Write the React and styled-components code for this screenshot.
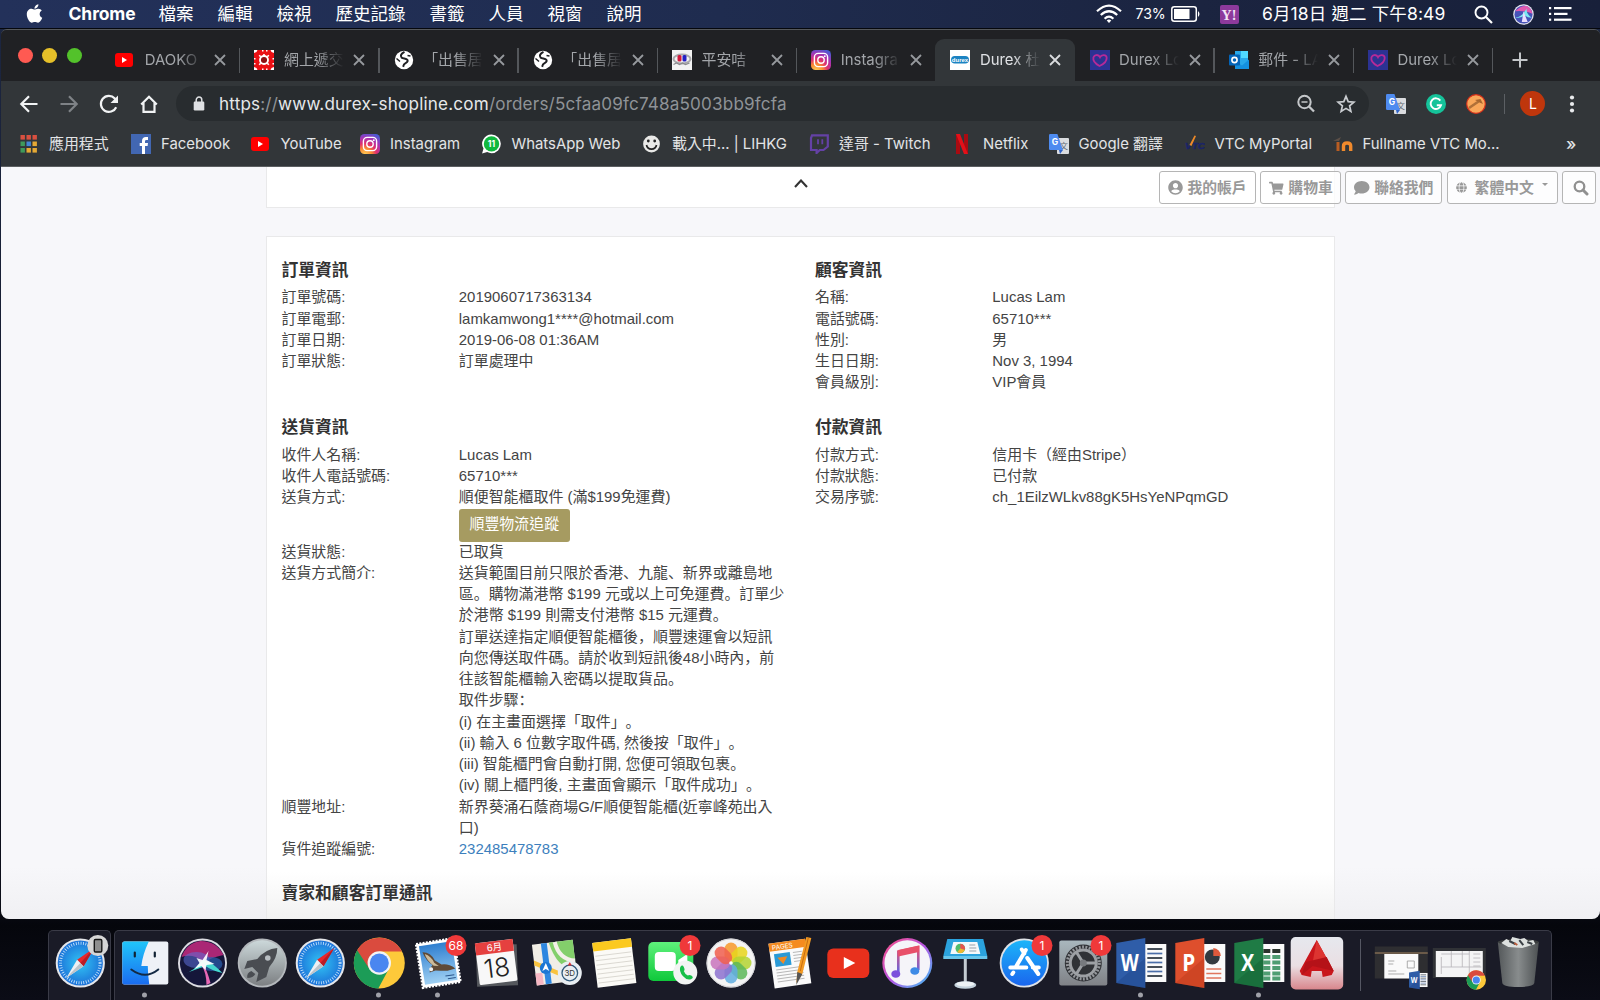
import React from "react";
import styled, { createGlobalStyle } from "styled-components";
import { FaApple, FaUserCircle, FaShoppingCart, FaComment, FaGlobe } from "react-icons/fa";

const ui = `Inter, "Noto Sans CJK TC", sans-serif`;
const body = `"Liberation Sans", "Noto Sans CJK TC", sans-serif`;

const Global = createGlobalStyle`
  * { box-sizing: border-box; }
  html, body { margin: 0; padding: 0; }
  body { width: 1600px; height: 1000px; overflow: hidden; background: #05060d; }
  svg { display: block; flex: none; }
`;

const Desktop = styled.div`
  display: flex;
  flex-direction: column;
  width: 1600px;
  height: 1000px;
  overflow: hidden;
  background: linear-gradient(180deg, #1d2742 0, #0b0d18 900px, #05060c 925px, #0b0c16 1000px);
`;

/* ---------- menu bar ---------- */
const MenuBar = styled.header`
  display: flex;
  align-items: center;
  height: 28px;
  flex: none;
  padding: 0 28px 0 25px;
  background: linear-gradient(90deg, #23315a 0, #1f2c4f 45%, #1b2440 75%, #18203a 100%);
  color: #fff;
  font-family: ${ui};
  font-size: 17.5px;
  line-height: 28px;
  white-space: nowrap;
`;
const AppleBox = styled.span`
  width: 43.5px;
  svg { margin: -2px 0 0 -1px; }
`;
const AppName = styled.b`
  width: 90px;
  font-size: 17.5px;
  font-weight: 700;
  letter-spacing: -0.1px;
`;
const Menus = styled.nav`
  display: flex;
  gap: 24px;
  flex: 1;
`;
const Status = styled.div`
  display: flex;
  align-items: center;
`;
const StatusItem = styled.span`
  display: block;
  width: ${(p) => p.$w}px;
  font-size: ${(p) => p.$size || 17.5}px;
  letter-spacing: ${(p) => p.$ls || 0}px;
`;

/* ---------- browser window ---------- */
const Window = styled.main`
  display: flex;
  flex-direction: column;
  flex: none;
  width: 1599px;
  height: 890px;
  margin-left: 1px;
  border-radius: 6px 6px 8px 8px;
  overflow: hidden;
  border-top: 1px solid #55585b;
  background: #323639;
`;
const Gap = styled.div`
  height: 1px;
  flex: none;
  background: #05070c;
`;
const TabStrip = styled.div`
  display: flex;
  height: 51px;
  flex: none;
  background: #202124;
  font-family: ${ui};
`;
const Lights = styled.div`
  display: flex;
  gap: 9.6px;
  width: 99.3px;
  padding: 18px 0 0 16.5px;
`;
const Light = styled.i`
  width: 15px;
  height: 15px;
  border-radius: 50%;
  background: ${(p) => p.$c};
`;
const Tab = styled.div`
  display: flex;
  align-items: center;
  width: 139.2px;
  height: 42px;
  margin-top: 9px;
  padding-left: 15px;
  position: relative;
  border-radius: 9px 9px 0 0;
  background: ${(p) => (p.$active ? "#323639" : "transparent")};
  color: ${(p) => (p.$active ? "#dfe1e4" : "#a3a6aa")};
  &::after {
    content: "";
    display: ${(p) => (p.$sep ? "block" : "none")};
    position: absolute;
    right: -1px;
    top: 9px;
    width: 1.4px;
    height: 25px;
    background: #54575b;
  }
`;
const TabTitle = styled.span`
  width: 60px;
  margin-left: 9.5px;
  overflow: hidden;
  white-space: nowrap;
  font-size: 14.9px;
  line-height: 22px;
  mask-image: linear-gradient(90deg, #000 55%, transparent 100%);
`;
const CloseBox = styled.span`
  margin-left: 9.5px;
  color: ${(p) => (p.$active ? "#dadcdf" : "#96999d")};
`;
const NewTab = styled.span`
  padding: 22px 0 0 20px;
`;

const Toolbar = styled.div`
  display: flex;
  align-items: center;
  height: 45px;
  flex: none;
`;
const NavButtons = styled.div`
  display: flex;
  gap: 16px;
  width: 175px;
  padding-left: 16px;
`;
const Omnibox = styled.div`
  display: flex;
  align-items: center;
  width: 1193px;
  height: 35px;
  border-radius: 18px;
  background: #282c2f;
  padding: 0 11px 0 17px;
`;
const Url = styled.span`
  flex: 1;
  margin-left: 14px;
  font-family: ${ui};
  font-size: 17.1px;
  line-height: 34px;
  letter-spacing: 0.18px;
  color: #e6e8ea;
  white-space: nowrap;
`;
const Dim = styled.span`
  color: #8f9397;
`;
const OmniActions = styled.span`
  display: flex;
  gap: 16px;
`;
const Extensions = styled.div`
  display: flex;
  align-items: center;
  padding-left: 17px;
`;
const ExtSlot = styled.span`
  display: flex;
  width: ${(p) => p.$w}px;
`;
const ToolDivider = styled.i`
  width: 1.4px;
  height: 20px;
  margin: 0 15px 0 17px;
  background: #5c6064;
`;
const Avatar = styled.span`
  width: 25px;
  height: 25px;
  border-radius: 50%;
  background: #bf360c;
  color: #fff;
  font: 14px/25px ${ui};
  text-align: center;
  margin-right: 19px;
`;

const Bookmarks = styled.div`
  display: flex;
  align-items: center;
  height: 41px;
  flex: none;
  padding-left: 18px;
  padding-bottom: 5px;
  border-bottom: 1px solid #5c5f61;
  font-family: ${ui};
  color: #e2e4e6;
`;
const Bookmark = styled.span`
  display: flex;
  align-items: center;
  gap: 10px;
  width: ${(p) => p.$w}px;
  font-size: 14.9px;
  line-height: 24px;
  white-space: nowrap;
`;
const More = styled.span`
  margin-left: auto;
  width: 34px;
  font-size: 17px;
  line-height: 22px;
  font-weight: 500;
`;

/* ---------- shop page ---------- */
const Page = styled.section`
  position: relative;
  display: flex;
  flex-direction: column;
  align-items: center;
  flex: 1;
  background: linear-gradient(180deg, #f7f7fa 0, #f7f7fa 700px, #f0f0f3 752px);
  font-family: ${body};
  font-size: 14.95px;
  line-height: 21.28px;
  color: #444;
  text-spacing-trim: space-all;
`;
const CollapseCard = styled.div`
  display: flex;
  justify-content: center;
  width: 1069px;
  height: 41px;
  flex: none;
  padding-top: 12px;
  background: #fff;
  border: solid #e9e9ea;
  border-width: 0 1.5px 1.5px;
`;
const Card = styled.div`
  display: grid;
  grid-template-columns: 533.5px 1fr;
  align-content: start;
  width: 1069px;
  flex: 1;
  margin-top: 28px;
  padding: 22px 14px 0 14.5px;
  background: linear-gradient(180deg, #fff 0, #fff 635px, #f1f1f1 684px);
  border: solid #e9e9ea;
  border-width: 1.5px 1.5px 0;
`;
const Block = styled.section`
  min-height: ${(p) => p.$h || 0}px;
`;
const Heading = styled.h2`
  margin: 0 0 ${(p) => p.$mb || 4.3}px;
  font-size: 16.8px;
  line-height: 23px;
  font-weight: 700;
  color: #333;
  white-space: nowrap;
`;
const Row = styled.div`
  display: grid;
  grid-template-columns: 177.3px 1fr;
  white-space: nowrap;
`;
const TextLine = styled.div`
  height: 21.28px;
`;
const Punct = styled.span`
  font-family: "Noto Sans CJK SC", sans-serif;
  line-height: 0;
`;
const Track = styled.button`
  display: block;
  width: 111px;
  height: 33px;
  margin: 1px 0 -1px;
  padding: 0 0 3px;
  border: 0;
  border-radius: 3px;
  background: #a69b61;
  color: #fff;
  font: 14.95px/30px ${body};
`;
const Link = styled.a`
  color: #3d7fbd;
`;
const FloatBar = styled.div`
  position: absolute;
  top: 4px;
  right: 4px;
  display: flex;
  gap: 4.4px;
`;
const FloatBtn = styled.span`
  display: flex;
  align-items: center;
  width: ${(p) => p.$w}px;
  height: 32.5px;
  padding: 1px 0 0 8px;
  border: 1.4px solid #b5b5b5;
  border-radius: 3px;
  background: rgba(255, 255, 255, 0.75);
  color: #999;
  font: 700 14.8px/30px ${body};
  white-space: nowrap;
`;
const BtnLabel = styled.span`
  margin-left: ${(p) => p.$ml || 4.5}px;
`;
const Caret = styled.i`
  margin: -7px 0 0 8px;
  border: solid transparent;
  border-top-color: #999;
  border-width: 3.5px 3.5px 0;
`;

/* ---------- dock ---------- */
const DockRow = styled.footer`
  display: flex;
  gap: 3px;
  height: 70px;
  margin-top: 11px;
  padding-left: 48px;
  flex: none;
`;
const Shelf = styled.div`
  display: flex;
  width: ${(p) => p.$w}px;
  padding-left: ${(p) => p.$pl}px;
  background: #1a1b27;
  border: 1px solid #3a3b47;
  border-bottom: 0;
  border-radius: 5px 5px 0 0;
`;
const Slot = styled.div`
  width: 58.65px;
  flex: none;
`;
const ShelfDivider = styled.i`
  width: 1.3px;
  height: 52px;
  margin: 8px 10.5px 0 13px;
  background: #555763;
`;

/* ---------- small icons ---------- */
const YouTube = () => (
  <svg width="20" height="20" viewBox="0 0 20 20"><rect x="0" y="3" width="18" height="14" rx="3" fill="#f00" /><path d="M7 7l5 3-5 3z" fill="#fff" /></svg>
);
const Insta = () => (
  <svg width="20" height="20" viewBox="0 0 20 20">
    <defs>
      <radialGradient id="ig" cx="0.25" cy="1.05" r="1.15"><stop offset="0" stopColor="#ffd45a" /><stop offset=".3" stopColor="#f98a33" /><stop offset=".5" stopColor="#e1306c" /><stop offset=".75" stopColor="#a534b5" /><stop offset="1" stopColor="#4a5bd3" /></radialGradient>
    </defs>
    <rect width="20" height="20" rx="4.5" fill="url(#ig)" />
    <g fill="none" stroke="#fff" strokeWidth="1.4"><rect x="3.4" y="3.4" width="13.2" height="13.2" rx="3.8" /><circle cx="10" cy="10" r="3.2" /></g>
    <circle cx="13.8" cy="6.2" r=".9" fill="#fff" />
  </svg>
);
const Flower = () => (
  <svg width="20" height="20" viewBox="-10 -10 20 20">
    <rect x="-10" y="-10" width="20" height="20" fill="#ea0f14" />
    <g fill="#fff"><path d="M-10-10h3.500l-1 2-2.500 1zM10-10H6.500l1 2 2.500 1zM-10 10h3.500l-1-2-2.500-1zM10 10H6.500l1-2 2.500-1z" /><path d="M-2-10h1.500v1.500H-2zM2-10H3.500v1.500H2zM-2 8.500h1.500V10H-2zM2 8.500h1.500V10H2zM-10-2h1.500v1.500H-10zM-10 3h1.500v1.500H-10zM8.500-2H10v1.500H8.500zM8.500 3H10v1.500H8.500z" /></g>
    <circle r="4" fill="#8e1014" stroke="#fff" strokeWidth="1.900" /><path d="M-4.800-4.800l1.500 1.500M4.800-4.800L3.300-3.300M-4.800 4.800l1.500-1.500M4.800 4.800L3.300 3.300M0-6V-4" stroke="#fff" strokeWidth="1.600" />
  </svg>
);
const GlobeTab = () => (
  <svg width="20" height="20" viewBox="0 0 20 20"><circle cx="10" cy="10" r="9.2" fill="#fff" /><path d="M10.5 1.8C7 3.5 6 6 7.6 7.6c1.6 1.2 4.6.7 5.8 2.2 1 1.5-.6 3-2.8 4-1 .7-1 2-1.4 3" fill="none" stroke="#202124" strokeWidth="2" /><path d="M2.500 8.500L6 11.500M13.500 5.500l3 .5" stroke="#202124" strokeWidth="1.500" /></svg>
);
const PingAn = () => (
  <svg width="20" height="20" viewBox="0 0 20 20"><rect width="20" height="20" fill="#f2f2f2" /><ellipse cx="10" cy="9" rx="8.500" ry="4.500" fill="none" stroke="#a8a8ac" strokeWidth="2" /><rect x="5.5" y="5" width="4" height="6.500" rx="1.500" fill="#d2193c" /><rect x="10.5" y="5" width="4" height="6.500" rx="1.500" fill="#2420c4" /><path d="M1.500 14.500l3-1.500 3 1.500 3-1.500 3 1.500 4-1.500" stroke="#8a8a8e" strokeWidth="1.300" fill="none" /></svg>
);
const DurexIcon = () => (
  <svg width="20" height="20" viewBox="0 0 20 20"><rect width="20" height="20" fill="#fff" /><rect x="1" y="6" width="18" height="7.6" rx="3.8" fill="#1b83c2" /><text x="10" y="11.8" fontSize="6" fontWeight="700" fill="#fff" textAnchor="middle" fontFamily="Liberation Sans">durex</text></svg>
);
const Heart = () => (
  <svg width="20" height="20" viewBox="0 0 20 20"><rect width="20" height="20" fill="#2b3293" /><path d="M9.500 16C5 13.500 2.800 10.500 3.400 7.600 4.300 4.500 8.500 4 10 7.200c1.600-3.200 6.500-2.700 6.700.5C16.800 11 14 14 9.500 16z" fill="none" stroke="#b52a98" strokeWidth="1.800" /></svg>
);
const Outlook = () => (
  <svg width="20" height="20" viewBox="0 0 20 20"><rect x="6" y="1" width="13" height="15" fill="#28a8ea" /><rect x="12" y="1" width="7" height="7" fill="#50d9ff" /><path d="M6 19V11l7 4.500 7-6V19z" fill="#1490df" /><rect y="4.500" width="11" height="11" rx="1" fill="#0364b8" /><circle cx="5.500" cy="10" r="2.600" fill="none" stroke="#fff" strokeWidth="1.600" /></svg>
);
const Close = () => (
  <svg width="12" height="12" viewBox="0 0 12 12"><path d="M1 1l10 10M11 1L1 11" stroke="currentColor" strokeWidth="1.8" /></svg>
);
const Translate = () => (
  <svg width="20" height="20" viewBox="0 0 20 20"><rect x="8" y="4" width="12" height="16" rx="1" fill="#dadcdf" /><text x="14.700" y="15" fontSize="8.500" fill="#5f6a74" textAnchor="middle" fontFamily="Noto Sans CJK TC">文</text><path d="M1.200 0h7.200L14 16H1.200Q0 16 0 14.800V1.200Q0 0 1.200 0z" fill="#4e8bf0" /><path d="M10 16h4l-3 4z" fill="#2f63c8" /><text x="6" y="11" fontSize="8.500" fontWeight="700" fill="#fff" textAnchor="middle" fontFamily="Inter">G</text></svg>
);
const Apps = () => (
  <svg width="20" height="20" viewBox="0 0 20 20">
    {["#d95040", "#d95040", "#d95040", "#3f9a5a", "#4285d4", "#e5a935", "#3f9a5a", "#e5a935", "#e5a935"].map((c, i) => (<rect key={i} x={1.5 + (i % 3) * 6} y={1 + Math.floor(i / 3) * 6.500} width="4.400" height="4.600" fill={c} />))}
  </svg>
);
const Facebook = () => (
  <svg width="20" height="20" viewBox="0 0 20 20"><rect width="20" height="20" fill="#4267b2" /><path d="M11 20v-8H8.700V9H11V7c0-2.600 1.500-4 3.900-4h2.100v2.900h-1.500c-1.200 0-1.500.600-1.500 1.500V9h3l-.400 3H14v8z" fill="#fff" /></svg>
);
const Whats = () => (
  <svg width="20" height="20" viewBox="0 0 20 20"><path d="M9.500 .5A9.300 9.300 0 0 1 9.500 19.200a9 9 0 0 1-4.300-1.100L.1 19.500 1.500 14.600A9.300 9.300 0 0 1 9.500 .5z" fill="#fff" /><circle cx="9.500" cy="9.900" r="7.700" fill="#10b83e" /><text x="9.500" y="13" fontSize="8.500" fontWeight="700" textAnchor="middle" fill="#fff" fontFamily="Inter">11</text></svg>
);
const Lihkg = () => (
  <svg width="20" height="20" viewBox="0 0 20 20"><circle cx="9.500" cy="10" r="8.400" fill="#e9e9e7" /><circle cx="6.300" cy="7" r="1.400" fill="#222" /><circle cx="12.700" cy="7" r="1.400" fill="#222" /><path d="M4.500 11c1 5.500 9 5.500 10 0" fill="none" stroke="#222" strokeWidth="1.700" /></svg>
);
const TwitchIcon = () => (
  <svg width="20" height="20" viewBox="0 0 20 20"><path d="M3 1.300h15.800V12.500L14.500 16H10.800l-3.200 3v-3H2V4z" fill="none" stroke="#6441a5" strokeWidth="2.200" /><path d="M9 5.300v5M13.300 5.300v5" stroke="#6441a5" strokeWidth="1.800" /></svg>
);
const NetflixIcon = () => (
  <svg width="20" height="20" viewBox="0 0 20 20"><path d="M3 0h4v20l-4 .3zM11 0h4v20.300L11 20z" fill="#a90b12" /><path d="M3 0h4l8 20.300-4-.3z" fill="#e21019" /></svg>
);
const VtcIcon = () => (
  <svg width="20" height="20" viewBox="0 0 20 20"><text x="0" y="15" fontSize="9.500" fontStyle="italic" fontWeight="700" fill="#1b2468" stroke="#1b2468" strokeWidth=".5" textLength="20" lengthAdjust="spacingAndGlyphs" fontFamily="Liberation Sans">VTC</text><path d="M4.500 11l5-9.500 1.500.5L6.500 12z" fill="#ef8a28" /></svg>
);
const MoodleIcon = () => (
  <svg width="20" height="20" viewBox="0 0 20 20"><path d="M0 7l8-4-2 4z" fill="#5d5048" /><path d="M5 8v9" stroke="#b95d22" strokeWidth="3" /><path d="M10.500 17v-5q0-3 3.600-3t3.600 3v5" stroke="#f08a2c" strokeWidth="3.400" fill="none" /></svg>
);

/* ---------- dock icons, drawn around the centre of a slot ---------- */
const DockIcon = ({ children, badge, running }) => (
  <svg width="58.600" height="69" viewBox="-29.300 -32 58.600 69">
    {children}
    {badge && (<g><circle cx="17.700" cy="-17.500" r="10.500" fill="#f0393a" /><text x="17.700" y="-13.200" fontSize="12" fill="#fff" textAnchor="middle" fontFamily="Inter">{badge}</text></g>)}
    {running && <circle cx="-.8" cy="32" r="2.500" fill="#a0a1a8" />}
  </svg>
);
const Safari = () => (
  <g>
    <circle r="24.600" fill="#e4e6ea" /><circle r="22.600" fill="url(#saf)" />
    <circle r="19.800" fill="none" stroke="#cfeaff" strokeWidth="3" strokeDasharray="0.800 1.650" />
    <path d="M14-15L3.200 3.200-3.200-3.200z" fill="#e8262c" /><path d="M-14 15L-3.200-3.200 3.200 3.200z" fill="#eef0f2" /><path d="M14-15L3.200 3.200 0 0z" fill="#b81c26" /><path d="M-14 15L3.200 3.200 0 0z" fill="#bcc3ca" />
  </g>
);
const Chrome = () => (
  <g>
    <circle r="25.500" fill="#fdc93a" />
    <path d="M0-11.500H-1L-21.800-13.200A25.500 25.500 0 0 0-1 25.500L9.500 6z" fill="#1c9c57" />
    <path d="M-22.100-12.750A25.500 25.500 0 0 1 22.600-11.500H0L-10.500 5z" fill="#da4b3e" />
    <circle r="11.700" fill="#f4f4f4" /><circle r="9.500" fill="#4a86f0" />
  </g>
);
const Office = ({ c, d, letter, children }) => (
  <g>
    <rect x="0" y="-19" width="25" height="38" fill="#fafafa" />{children}
    <path d="M-25-20L4-25V25L-25 20z" fill={c} /><path d="M-25 20L4-5V25z" fill={d} opacity=".3" />
    <text x="-11.600" y="8.300" fontSize="23" fontWeight="700" fill="#fff" textAnchor="middle" fontFamily="Open Sans" textLength={letter === "W" ? 18 : 13} lengthAdjust="spacingAndGlyphs">{letter}</text>
  </g>
);
const WordLines = () => (<g strokeWidth="1.700">{[-14, -9.500, -5, -.5, 4, 8.500, 13].map((y, i) => (<path key={y} d={`M6 ${y}h15`} stroke={i % 2 ? "#4b6ea8" : "#26303c"} />))}</g>);
const petals = ["#f79a2c", "#e8d51c", "#b5d433", "#5cb85a", "#62aee0", "#8d72cf", "#c874bd", "#f0604f"];

const dockItems = [
  { run: 1, el: (<g><rect x="-23" y="-21.500" width="46" height="43" rx="2" fill="#eef1f7" /><path d="M-21-21.500H3.500Q-2.500-9-4 3H2.500Q2.500 12 4 21.500H-21Q-23 21.500-23 19.500V-19.500Q-23-21.500-21-21.500z" fill="url(#find)" /><path d="M-10.500-10.500v4M9.500-10.500v4" stroke="#123" strokeWidth="2.200" strokeLinecap="round" /><path d="M-14 6.500Q0 17 13 6.500" fill="none" stroke="#142a44" strokeWidth="2" strokeLinecap="round" /></g>) },
  { el: (<g transform="translate(-.8 0)"><circle r="24.500" fill="#dcdce2" /><circle r="22.600" fill="#15163a" /><path d="M-21-6Q-16-20-2-22 14-22 21-8 12-6 8-4L0-2Q-10-10-21-6z" fill="#c42a80" opacity=".85" /><ellipse cx="-6" cy="-3" rx="13" ry="8" fill="#5c6fd8" opacity=".55" /><ellipse cx="9" cy="1" rx="11" ry="7" fill="#2a5fae" opacity=".7" /><path d="M-19 11Q-8 8-2-1L1-3 8 0Q12 2 20 10 10 8 3 3-8 7-19 11z" fill="#45d6cf" /><path d="M0 0Q5 8 8 20L4 22Q4 10-1 2z" fill="#e868b6" /><path d="M-6-5L0-3 6-12 4-3 12 1 4 2 3 7-1 3-8 6-3 0z" fill="#fff" opacity=".92" /></g>) },
  { el: (<g><circle r="24.600" fill="#b4b8bc" /><circle r="22.800" fill="url(#rock)" /><path d="M15-15Q3-14-5-4L-15-2-18 6-10 4-4 10-6 19 4 14 7 4Q15-5 15-15z" fill="#4a4d52" /><circle cx="5.500" cy="-5" r="2.800" fill="#b9bfc3" /><path d="M-11 8Q-16 10-15 15-9 15-7 11z" fill="#4a4d52" /></g>) },
  { el: <Safari /> },
  { run: 1, el: <Chrome /> },
  { run: 1, badge: "68", el: (<g transform="rotate(-9)"><rect x="-19" y="-22" width="38" height="44" fill="#fff" stroke="#fff" strokeWidth="2.500" strokeDasharray="2 1.300" /><rect x="-16.500" y="-19.500" width="33" height="39" fill="url(#sky)" /><path d="M-14-13Q-6-12-3-3L3 2Q10 2 16 8L8 9 1 8-4 7-10 8-9 4-6 1Q-12-4-14-13z" fill="#5f4a37" /><path d="M-12-11Q-6-8-4-1L0 3-5 2Q-11-4-12-11z" fill="#cdbb9a" /><circle cx="-8" cy="5" r="2" fill="#eee" /><path d="M5 14h9M7 17h8" stroke="#2b568c" strokeWidth="1" /></g>) },
  { el: (<g transform="rotate(-7)"><rect x="-20" y="-18" width="41" height="41" fill="#54575c" transform="rotate(5)" /><rect x="-19" y="-22" width="38" height="42" rx="1.500" fill="#f8f8f8" /><path d="M-19-22h38v12h-38z" fill="#e5403f" /><text y="-12.500" fontSize="9.500" fill="#fff" textAnchor="middle" fontFamily="Inter, Noto Sans CJK TC">6月</text><text y="14" fontSize="26" fill="#222" textAnchor="middle" fontFamily="Inter" fontWeight="300">18</text></g>) },
  { el: (<g><g transform="rotate(-7)"><rect x="-21" y="-21" width="41" height="41" fill="#f1eee6" /><path d="M-4-21H20V8Q2 8-4-21z" fill="#83cf6b" /><path d="M2-21Q4-3 20 0" stroke="#f3f0e9" strokeWidth="4" fill="none" /><path d="M-12-21h6V20h-6z" fill="#2d87e0" /><path d="M-21-5L2 8V13L-21 0z" fill="#f9c33e" /><path d="M-21 8h7v12h-7z" fill="#f6b7c3" /></g><circle cx="-9.500" cy="5" r="6" fill="#1b77d4" /><path d="M-9.500 0l3.500 8-3.500-2-3.500 2z" fill="#fff" /><circle cx="14.500" cy="10" r="12" fill="#e9eef2" /><circle cx="14.500" cy="10" r="7.800" fill="none" stroke="#30597a" strokeWidth="1.300" /><text x="14.500" y="12.800" fontSize="8" textAnchor="middle" fill="#333" fontFamily="Inter">3D</text><path d="M14.500-1l2 3.500h-4z" fill="#d33" /></g>) },
  { el: (<g transform="rotate(-7)"><rect x="-19.500" y="-22.500" width="39" height="45" fill="#fbfaf6" /><path d="M-19.500-22.500h39v8.500h-39z" fill="#fbc91f" /><g stroke="#d4d2cb" strokeWidth=".8">{[-9, -4.500, 0, 4.500, 9, 13.500, 18].map((y) => (<path key={y} d={`M-18 ${y}h36`} />))}</g></g>) },
  { badge: "1", el: (<g><rect x="-24" y="-21" width="45" height="39" rx="5" fill="url(#ft)" /><rect x="-17.500" y="-11" width="21" height="19" rx="4" fill="#fff" /><path d="M6-3l9-6V8L6 2z" fill="#fff" /><circle cx="13" cy="9.500" r="12" fill="#f2f4f3" /><path d="M8 4q2-3 3.500 0t0 4q1 3 4 4.500 1.500-1 3.500 0 3 2 0 3.500Q15 18 10.500 13 6.500 8 8 4z" fill="#18bf49" /></g>) },
  { el: (<g transform="translate(-.3 0)"><circle r="24.500" fill="#f4f4f4" /><circle r="24" fill="none" stroke="#cfcfd3" />{petals.map((c, i) => (<rect key={c} x="-6.500" y="-20.500" width="13" height="19.500" rx="6.500" fill={c} opacity=".86" transform={`rotate(${i * 45})`} />))}<circle r="1.800" fill="#fff" /></g>) },
  { el: (<g><g transform="rotate(-8)"><rect x="-19" y="-22" width="37" height="45" fill="#fafafa" /><path d="M-19-22h37v8h-37z" fill="#f58b1f" /><text x="-16" y="-15.200" fontSize="6.500" fill="#fff" fontFamily="Inter">PAGES</text><rect x="-15" y="-11" width="16" height="13" fill="#2a9ad6" /><path d="M-12-7h10l-5 7z" fill="#f08a24" /><g stroke="#b8b8b8" strokeWidth="1">{[5, 8, 11, 14, 17].map((y) => (<path key={y} d={`M-15 ${y}h27`} />))}<path d="M4-10h9M4-7h9M4-4h9M4-1h9" /></g></g><path d="M16-26l5 1-9 36-6 9 1-11z" fill="#f39a22" /><path d="M7 9l5 2-6 11z" fill="#555" /><path d="M18-25L10 8" stroke="#c86c10" /></g>) },
  { el: (<g><rect x="-21" y="-14.500" width="42" height="29.500" rx="6" fill="#e8301c" /><path d="M-4.500-6L7 0-4.500 6z" fill="#fff" /></g>) },
  { el: (<g><circle r="25" fill="url(#itr)" /><circle r="22.800" fill="#f5f4f9" /><path d="M-9 10.500V-11.500L11-16V7" fill="none" stroke="url(#itn)" strokeWidth="2.600" /><path d="M-9-13L11.500-17.500V-11L-9-6.500z" fill="#e8506a" /><ellipse cx="-11.500" cy="11" rx="4.500" ry="3.800" fill="#7b50dc" /><ellipse cx="7.500" cy="8" rx="4.500" ry="3.800" fill="#3e8ae6" /></g>) },
  { el: (<g><path d="M-18-24H18L22-7H-22z" fill="#2ba3de" /><path d="M-22-7h44v3h-44z" fill="#68c6ec" /><path d="M-12-21H12L15-9H-15z" fill="#f5f8fa" /><circle cx="-5" cy="-14.500" r="4.800" fill="#4fbc6c" /><path d="M-5-14.500V-19.300A4.800 4.800 0 0 1-.5-13z" fill="#e9524e" /><path d="M-5-14.500L-.5-13A4.800 4.800 0 0 1-8-11z" fill="#f1b72e" /><path d="M4-18h6M4-15h7M4-12h7" stroke="#98a2aa" /><path d="M0-4V20" stroke="#c4ccd2" strokeWidth="3" /><ellipse cy="22" rx="11" ry="3.800" fill="#c5d3dd" /><ellipse cy="21" rx="9" ry="2.500" fill="#eef3f6" /></g>) },
  { badge: "1", el: (<g><circle r="24.600" fill="#dfe2e6" /><circle r="22.800" fill="url(#as)" /><g stroke="#fff" strokeWidth="4" strokeLinecap="round"><path d="M1.500-13L-8.500 4M-2.500-13.500L0-9.500M3-5L14 11M-14 4.500H2M8.500 4.500h6M-11 9.500l-1 1.500" /></g></g>) },
  { badge: "1", el: (<g><rect x="-24" y="-22.500" width="48" height="45" rx="2" fill="url(#set)" /><circle r="18.500" fill="#303236" /><circle r="16" fill="none" stroke="#94979b" strokeWidth="3" strokeDasharray="1.900 1.450" /><circle r="13" fill="none" stroke="#9da0a4" strokeWidth="3" /><path d="M0 0L-7-11M0 0L-7 11M0 0H13" stroke="#9da0a4" strokeWidth="3" /><circle r="3.500" fill="#777a7e" /></g>) },
  { run: 1, el: <Office c="#2f5da8" d="#17377a" letter="W"><WordLines /></Office> },
  { el: (<Office c="#de4f2d" d="#a92d12" letter="P"><circle cx="12" cy="-6" r="7.500" fill="#333a40" /><path d="M13-7V-15A8 8 0 0 1 20.500-7z" fill="#de5a3c" /><path d="M6 6h15M6 10.500h15M6 15h15" stroke="#e0765e" strokeWidth="1.600" /></Office>) },
  { run: 1, el: (<Office c="#1f7b45" d="#0d5229" letter="X">{[-14, -8, -2.500, 3, 8.500, 13.500].map((y, i) => (<g key={y} fill={i ? "#4f9d72" : "#2a332d"}><rect x="4" y={y} width="7" height="4" /><rect x="13" y={y} width="8" height="4" /></g>))}</Office>) },
  { el: (<g transform="translate(-.6 0)"><rect x="-26" y="-26" width="52.500" height="52.500" rx="5" fill="url(#cad)" /><path d="M0-23L17 8 15 12 6 14 5 8H-5L-6 14-15 12-17 8z" fill="#c9161c" /><path d="M0-23L17 8 4-3-4-1z" fill="#dd3431" /><path d="M-11-1L10-6 17 8-4 3-15 12z" fill="#b51218" /></g>) },
];

const Defs = () => (
  <svg width="0" height="0" style={{ position: "absolute" }}>
    <defs>
      <radialGradient id="saf"><stop offset="0" stopColor="#32c5f5" /><stop offset="1" stopColor="#1c72d8" /></radialGradient>
      <linearGradient id="find" x2="0" y2="1"><stop offset="0" stopColor="#20c6fa" /><stop offset="1" stopColor="#1a6cf0" /></linearGradient>
      <linearGradient id="rock" x2="0" y2="1"><stop offset="0" stopColor="#ccd8da" /><stop offset="1" stopColor="#7c7f82" /></linearGradient>
      <linearGradient id="sky" x2="0" y2="1"><stop offset="0" stopColor="#2f7fd0" /><stop offset="1" stopColor="#9fd0f3" /></linearGradient>
      <linearGradient id="ft" x2="0" y2="1"><stop offset="0" stopColor="#5ef17b" /><stop offset="1" stopColor="#0fc83b" /></linearGradient>
      <linearGradient id="itr" x2="1" y2="1"><stop offset="0" stopColor="#fb4d7d" /><stop offset=".5" stopColor="#b655e4" /><stop offset="1" stopColor="#37c8f6" /></linearGradient>
      <linearGradient id="itn" x2="0" y2="1"><stop offset="0" stopColor="#f0526e" /><stop offset="1" stopColor="#5d67e4" /></linearGradient>
      <linearGradient id="as" x2="0" y2="1"><stop offset="0" stopColor="#1cb5f9" /><stop offset="1" stopColor="#1a66ee" /></linearGradient>
      <linearGradient id="set" x2="0" y2="1"><stop offset="0" stopColor="#a9b7bd" /><stop offset="1" stopColor="#808287" /></linearGradient>
      <linearGradient id="cad" x2="0" y2="1"><stop offset="0" stopColor="#e6e8ee" /><stop offset=".55" stopColor="#eadfe3" /><stop offset="1" stopColor="#d9868c" /></linearGradient>
      <linearGradient id="bin" x2="1" y2="0"><stop offset="0" stopColor="#54585a" /><stop offset=".5" stopColor="#888c8d" /><stop offset="1" stopColor="#4c5052" /></linearGradient>
    </defs>
  </svg>
);

const tabs = [
  { icon: <YouTube />, t: "DAOKO" },
  { icon: <Flower />, t: "網上遞交" },
  { icon: <GlobeTab />, t: "「出售居" },
  { icon: <GlobeTab />, t: "「出售居" },
  { icon: <PingAn />, t: "平安咭" },
  { icon: <Insta />, t: "Instagra", nosep: true },
  { icon: <DurexIcon />, t: "Durex 杜", active: true, nosep: true },
  { icon: <Heart />, t: "Durex Lo" },
  { icon: <Outlook />, t: "郵件 - LA" },
  { icon: <Heart />, t: "Durex Lo" },
];

const marks = [
  { icon: <Apps />, t: "應用程式", w: 112 },
  { icon: <Facebook />, t: "Facebook", w: 119.5 },
  { icon: <YouTube />, t: "YouTube", w: 109.5 },
  { icon: <Insta />, t: "Instagram", w: 121.5 },
  { icon: <Whats />, t: "WhatsApp Web", w: 160.5 },
  { icon: <Lihkg />, t: "載入中... | LIHKG", w: 167 },
  { icon: <TwitchIcon />, t: "達哥 - Twitch", w: 144 },
  { icon: <NetflixIcon />, t: "Netflix", w: 95.5 },
  { icon: <Translate />, t: "Google 翻譯", w: 136 },
  { icon: <VtcIcon />, t: "VTC MyPortal", w: 148 },
  { icon: <MoodleIcon />, t: "Fullname VTC Mo...", w: 166 },
];

const orderRows = [["訂單號碼:", "2019060717363134"], ["訂單電郵:", "lamkamwong1****@hotmail.com"], ["訂單日期:", "2019-06-08 01:36AM"], ["訂單狀態:", "訂單處理中"]];
const customerRows = [["名稱:", "Lucas Lam"], ["電話號碼:", "65710***"], ["性別:", "男"], ["生日日期:", "Nov 3, 1994"], ["會員級別:", "VIP會員"]];
const paymentRows = [["付款方式:", "信用卡（經由Stripe）"], ["付款狀態:", "已付款"], ["交易序號:", "ch_1EilzWLkv88gK5HsYeNPqmGD"]];
const intro = [
  "送貨範圍目前只限於香港、九龍、新界或離島地",
  "區。購物滿港幣 $199 元或以上可免運費。訂單少",
  "於港幣 $199 則需支付港幣 $15 元運費。",
  "訂單送達指定順便智能櫃後，順豐速運會以短訊",
  "向您傳送取件碼。請於收到短訊後48小時內，前",
  "往該智能櫃輸入密碼以提取貨品。",
  "取件步驟：",
  "(i) 在主畫面選擇「取件」。",
  "(ii) 輸入 6 位數字取件碼, 然後按「取件」。",
  "(iii) 智能櫃門會自動打開, 您便可領取包裹。",
  "(iv) 關上櫃門後, 主畫面會顯示「取件成功」。",
];

/* Full-width stops sit at the lower left of their cell. */
const Line = ({ text }) => (
  <TextLine>
    {text.split(/([、。，：])/).map((s, i) => (i % 2 ? <Punct key={i} lang="zh-Hans">{s}</Punct> : s))}
  </TextLine>
);

const shippingRows = [
  ["收件人名稱:", "Lucas Lam"],
  ["收件人電話號碼:", "65710***"],
  ["送貨方式:", <>順便智能櫃取件 (滿$199免運費)<Track>順豐物流追蹤</Track></>],
  ["送貨狀態:", "已取貨"],
  ["送貨方式簡介:", intro.map((l) => <Line key={l} text={l} />)],
  ["順豐地址:", <>新界葵涌石蔭商場G/F順便智能櫃(近寧峰苑出入<br />口)</>],
  ["貨件追蹤編號:", <Link>232485478783</Link>],
];

const Info = ({ title, rows, h, mb }) => (
  <Block $h={h}>
    <Heading $mb={mb}>{title}</Heading>
    {rows.map(([k, v]) => (<Row key={k}><div>{k}</div><div>{v}</div></Row>))}
  </Block>
);

export default function App() {
  return (
    <Desktop lang="zh-Hant">
      <Global />
      <Defs />
      <MenuBar>
        <AppleBox><FaApple size={21} /></AppleBox>
        <AppName>Chrome</AppName>
        <Menus>{["檔案", "編輯", "檢視", "歷史記錄", "書籤", "人員", "視窗", "說明"].map((m) => <span key={m}>{m}</span>)}</Menus>
        <Status>
          <StatusItem $w={40}>
            <svg width="26" height="20" viewBox="0 0 26 20"><g fill="none" stroke="#fff" strokeWidth="2.200"><path d="M1 7.300Q13-4 25 7.300M4.800 11Q13 3.500 21.200 11M8.600 14.700Q13 10.500 17.400 14.700" /></g><path d="M13 19l-2.300-2.600q2.300-2 4.600 0z" fill="#fff" /></svg>
          </StatusItem>
          <StatusItem $w={35.5} $size={14.2} $ls={-0.1}>73%</StatusItem>
          <StatusItem $w={49}>
            <svg width="30" height="16" viewBox="0 0 30 16"><rect x=".8" y=".8" width="24.500" height="14.400" rx="2.500" fill="none" stroke="#fff" strokeWidth="1.500" /><rect x="3" y="3" width="15.500" height="10" fill="#fff" /><path d="M27 5q3 3 0 6z" fill="#fff" /></svg>
          </StatusItem>
          <StatusItem $w={42}>
            <svg width="19" height="19" viewBox="0 0 19 19"><rect width="19" height="19" rx="2" fill="#8d3a9c" /><text x="9" y="14.500" fontSize="14" fontWeight="700" textAnchor="middle" fill="#f3e4f5" fontFamily="Liberation Serif">Y!</text></svg>
          </StatusItem>
          <StatusItem $w={211.5} $ls={0.12}>6月18日 週二 下午8:49</StatusItem>
          <StatusItem $w={39.5}>
            <svg width="19" height="19" viewBox="0 0 19 19"><circle cx="7.500" cy="7.500" r="6" fill="none" stroke="#fff" strokeWidth="1.900" /><path d="M12 12l6 6" stroke="#fff" strokeWidth="2.200" /></svg>
          </StatusItem>
          <StatusItem $w={36}>
            <svg width="21" height="21" viewBox="-25 -25 50 50"><circle r="24.500" fill="#e4e4ee" /><circle r="21.500" fill="#4652b8" /><path d="M-20-8Q-6-22 8-20 20-14 21-2 8-10-20-8z" fill="#e15ab0" /><path d="M-20 8Q-6 6 0-4L8-14Q5-3 20 8 10 8 2 2-6 10-20 8z" fill="#7be7f0" /><path d="M0-8L3 0 10 18-4 18z" fill="#e9dcff" /></svg>
          </StatusItem>
          <svg width="23" height="14" viewBox="0 0 23 14"><g fill="#fff"><rect width="2.200" height="2.200" /><rect y="5.800" width="2.200" height="2.200" /><rect y="11.600" width="2.200" height="2.200" /><rect x="5" width="17.500" height="2.200" /><rect x="5" y="5.800" width="13.500" height="2.200" /><rect x="5" y="11.600" width="17.500" height="2.200" /></g></svg>
        </Status>
      </MenuBar>
      <Gap />
      <Window>
        <TabStrip>
          <Lights><Light $c="#ff5a52" /><Light $c="#e6c029" /><Light $c="#53c22b" /></Lights>
          {tabs.map((t, i) => (
            <Tab key={i} $active={t.active} $sep={!t.nosep}>
              {t.icon}<TabTitle>{t.t}</TabTitle><CloseBox $active={t.active}><Close /></CloseBox>
            </Tab>
          ))}
          <NewTab><svg width="16" height="16" viewBox="0 0 16 16"><path d="M8 .5v15M.5 8h15" stroke="#c4c7ca" strokeWidth="2" /></svg></NewTab>
        </TabStrip>
        <Toolbar>
          <NavButtons>
            <svg width="24" height="24" viewBox="0 0 24 24"><path d="M20.500 12H5M12 4.300L4.300 12l7.700 7.700" fill="none" stroke="#f1f3f4" strokeWidth="2.200" /></svg>
            <svg width="24" height="24" viewBox="0 0 24 24"><path d="M3.500 12H19M12 4.300l7.700 7.700-7.700 7.700" fill="none" stroke="#7e8286" strokeWidth="2.200" /></svg>
            <svg width="24" height="24" viewBox="0 0 24 24"><path d="M19.200 15.200A8 8 0 1 1 17.800 6.500L20 9" fill="none" stroke="#f1f3f4" strokeWidth="2.200" /><path d="M21 3.500V11h-7.500z" fill="#f1f3f4" /></svg>
            <svg width="24" height="24" viewBox="0 0 24 24"><path d="M6.500 11v8.800h11V11M4.200 12.500L12 4.700l7.800 7.800" fill="none" stroke="#f1f3f4" strokeWidth="2.200" /></svg>
          </NavButtons>
          <Omnibox>
            <svg width="12" height="15" viewBox="0 0 12 15"><rect x=".7" y="5.500" width="10.600" height="9" rx="1.200" fill="#dfe1e4" /><path d="M3.200 6V3.900a2.800 2.800 0 0 1 5.600 0V6" fill="none" stroke="#dfe1e4" strokeWidth="1.500" /></svg>
            <Url>https<Dim>://</Dim>www.durex-shopline.com<Dim>/orders/5cfaa09fc748a5003bb9fcfa</Dim></Url>
            <OmniActions>
              <svg width="24" height="24" viewBox="0 0 24 24"><circle cx="10.500" cy="10" r="6.200" fill="none" stroke="#c4c7ca" strokeWidth="2" /><path d="M7.500 10h6" stroke="#c4c7ca" strokeWidth="1.400" /><path d="M15 14.500l5 5" stroke="#c4c7ca" strokeWidth="2.300" /></svg>
              <svg width="24" height="24" viewBox="0 0 24 24"><path d="M12 4.300l2.200 5.300 5.700.5-4.300 3.700 1.300 5.600L12 16.400l-4.900 3 1.300-5.600-4.300-3.700 5.700-.5z" fill="none" stroke="#c9ccd0" strokeWidth="1.700" /></svg>
            </OmniActions>
          </Omnibox>
          <Extensions>
            <ExtSlot $w={40}><Translate /></ExtSlot>
            <ExtSlot $w={40}><svg width="20" height="20" viewBox="0 0 20 20"><circle cx="10" cy="10" r="10" fill="#15c39a" /><path d="M14.300 6.600A5.300 5.300 0 1 0 15 11.200H10.800" fill="none" stroke="#fff" strokeWidth="1.900" /></svg></ExtSlot>
            <ExtSlot $w={21}><svg width="20" height="20" viewBox="0 0 20 20"><circle cx="10" cy="10" r="9.300" fill="#f9a75a" stroke="#d8301a" strokeWidth="1.200" /><path d="M3 14L12.500 7.500" stroke="#b07038" strokeWidth="2.600" /><path d="M9 6l5.500-1 2.500 5-3.500-1.500z" fill="#a8662e" /></svg></ExtSlot>
            <ToolDivider />
            <Avatar>L</Avatar>
            <svg width="16" height="20" viewBox="0 0 16 20"><g fill="#e9ebed"><circle cx="8" cy="3.500" r="2.100" /><circle cx="8" cy="10" r="2.100" /><circle cx="8" cy="16.500" r="2.100" /></g></svg>
          </Extensions>
        </Toolbar>
        <Bookmarks>
          {marks.map((m) => <Bookmark key={m.t} $w={m.w}>{m.icon}<span>{m.t}</span></Bookmark>)}
          <More>»</More>
        </Bookmarks>
        <Page>
          <CollapseCard><svg width="14" height="9" viewBox="0 0 14 9"><path d="M1 8l6-6.500L13 8" fill="none" stroke="#333" strokeWidth="2.100" /></svg></CollapseCard>
          <Card>
            <Info title="訂單資訊" rows={orderRows} h={156.7} />
            <Info title="顧客資訊" rows={customerRows} />
            <Info title="送貨資訊" rows={shippingRows} mb={5} h={466} />
            <Info title="付款資訊" rows={paymentRows} mb={5} />
            <Heading>賣家和顧客訂單通訊</Heading>
          </Card>
          <FloatBar>
            <FloatBtn $w={97}><FaUserCircle size={15} /><BtnLabel>我的帳戶</BtnLabel></FloatBtn>
            <FloatBtn $w={80.5}><FaShoppingCart size={14.500} /><BtnLabel>購物車</BtnLabel></FloatBtn>
            <FloatBtn $w={97}><FaComment size={15.500} /><BtnLabel>聯絡我們</BtnLabel></FloatBtn>
            <FloatBtn $w={111}><FaGlobe size={11} /><BtnLabel $ml={8}>繁體中文</BtnLabel><Caret /></FloatBtn>
            <FloatBtn $w={34}><svg width="18" height="18" viewBox="0 0 18 18"><circle cx="8.500" cy="7.500" r="4.800" fill="none" stroke="#909090" strokeWidth="2.300" /><path d="M12 11l4 4" stroke="#909090" strokeWidth="3" strokeLinecap="round" /></svg></FloatBtn>
          </FloatBar>
        </Page>
      </Window>
      <DockRow>
        <Shelf $w={62.5} $pl={2}>
          <Slot><DockIcon><g><Safari /><circle cx="17.500" cy="-17.500" r="10.500" fill="#d6d6d6" /><rect x="14" y="-23.500" width="7.500" height="12.500" rx="1.200" fill="#8e8e8e" stroke="#161616" strokeWidth="1.400" /></g></DockIcon></Slot>
        </Shelf>
        <Shelf $w={1438.5} $pl={1}>
          {dockItems.map((d, i) => <Slot key={i}><DockIcon badge={d.badge} running={d.run}>{d.el}</DockIcon></Slot>)}
          <ShelfDivider />
          <Slot><DockIcon><rect x="-26.500" y="-16.500" width="53" height="32" fill="#2e2e31" /><rect x="-17" y="-9" width="34" height="24.500" fill="#fafafa" /><path d="M-26.500-10h53" stroke="#c8a070" strokeWidth=".8" /><path d="M-13-2h6M-13 1h5M-13 8h8M-13 11h16M6-2h7v7H6z" stroke="#999" fill="none" strokeWidth=".8" /><g transform="translate(17 17) scale(.37)"><Office c="#2f5da8" d="#17377a" letter="W"><WordLines /></Office></g></DockIcon></Slot>
          <Slot><DockIcon><rect x="-26.500" y="-15" width="53" height="30" fill="#303236" /><rect x="-23.500" y="-12" width="47" height="26" fill="#f4f4f5" /><path d="M-18-9h28M-18-6V11M-8-12V4M10-12V13M-18 4h40M14-9h7M14-5h7M14-1h7M14 3h7M3-12V4" stroke="#b5b3b8" strokeWidth=".8" /><g transform="translate(17 17) scale(.38)"><Chrome /></g></DockIcon></Slot>
          <Slot><DockIcon><path d="M-20.500-21L-16 20Q-15 24 0 24T16 20L20.500-21z" fill="url(#bin)" /><ellipse cy="-21" rx="20.500" ry="3" fill="#3a3d3e" /><path d="M-17-20L-12-24-8-22-6-26 2-24 6-25 10-22 15-23 17-19 4-15-10-16z" fill="#dde1df" /><path d="M-9-22l6 3M1-23l4 5M9-21l5 2" stroke="#3b4146" strokeWidth="2" /><path d="M-4-20l3 2" stroke="#b85a3a" strokeWidth="2" /></DockIcon></Slot>
        </Shelf>
      </DockRow>
    </Desktop>
  );
}
